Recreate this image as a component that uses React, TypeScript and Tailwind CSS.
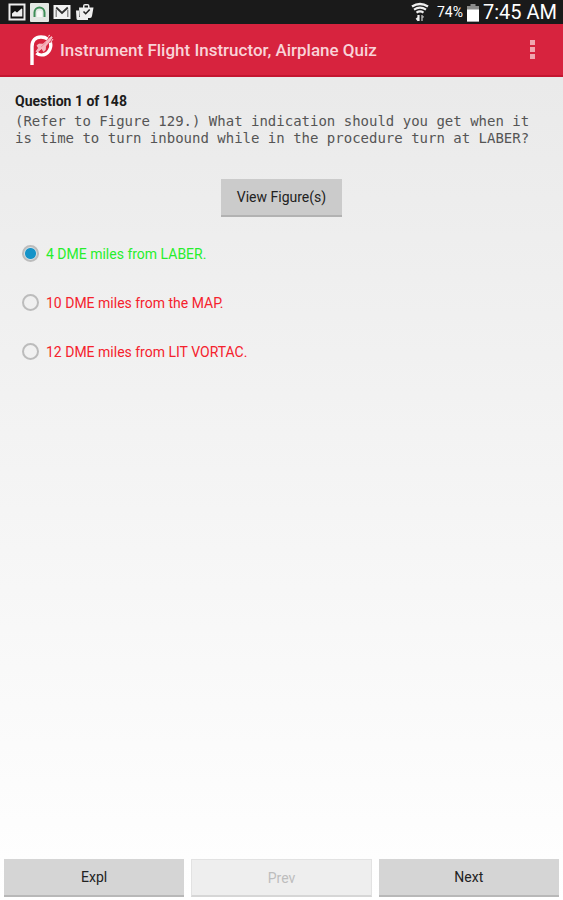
import { useState } from 'react';

const answers = [
  { id: 'a', text: '4 DME miles from LABER.', correct: true },
  { id: 'b', text: '10 DME miles from the MAP.', correct: false },
  { id: 'c', text: '12 DME miles from LIT VORTAC.', correct: false },
];

function StatusBar() {
  return (
    <div className="flex h-6 items-center justify-between bg-[#1a1a1a] px-2 pr-1.5 text-white">
      <div className="flex items-center gap-1">
        {/* picture */}
        <svg width="18" height="18" viewBox="0 0 18 18">
          <rect x="1.5" y="1.5" width="15" height="15" fill="#111" stroke="#eee" strokeWidth="2" />
          <path d="M4 13.5V10.5l3-2.5 2 1.5L13.5 5.5l.8.5v7.5z" fill="#eee" />
        </svg>
        {/* headset app */}
        <svg width="19" height="19" viewBox="0 0 19 19">
          <rect width="19" height="19" rx="1" fill="#e4e8e4" />
          <path d="M4.5 14V9.500a5 5 0 0 1 10 0V14" fill="none" stroke="#3f8f58" strokeWidth="2" />
          <path d="M7 14V10a2.500 2.500 0 0 1 5 0v4" fill="#f6faf6" />
        </svg>
        {/* mail */}
        <svg width="18" height="18" viewBox="0 0 18 18">
          <rect x="0.5" y="2" width="17" height="14" fill="#f2f2f2" />
          <path d="M3.2 4.5L9 10l5.8-5.5" fill="none" stroke="#333" strokeWidth="1.8" />
          <path d="M3.2 14V6.5M14.8 14V6.5" stroke="#777" strokeWidth="1.2" />
        </svg>
        {/* checked bag */}
        <svg width="18" height="18" viewBox="0 0 18 18" className="ml-px">
          <path d="M0 7.500h3V14h9v3H2q-1.500 0-1.500-1.500z" fill="#eee" />
          <path d="M3 4.500H7V3q0-2 2-2h2.500q2 0 2 2v1.500H17.500l-1.500 8.500q-.3 2-2 2H5.500q-2 0-2-2zM8.500 4.500H12V2.500H8.500z" fill="#eee" fillRule="evenodd" />
          <path d="M7.500 8.500l2.200 2.200 4-4.200" fill="none" stroke="#222" strokeWidth="1.600" />
        </svg>
      </div>
      <div className="flex items-center">
        <svg width="18" height="20" viewBox="0 0 18 20" fill="none" stroke="#eee">
          <path d="M1 4.500q8-5 16 0" strokeWidth="2.400" />
          <path d="M3 7.700q6-4 12 0" strokeWidth="2.200" />
          <path d="M5.500 10.700q3.500-2.500 7 0" strokeWidth="2.200" />
          <path d="M7.500 13v6M5.500 16l2 2.500" strokeWidth="2.200" />
          <path d="M11 19v-6M11 13.500l1.500 2" stroke="#aaa" strokeWidth="1.500" />
        </svg>
        <span className="ml-2 mr-1 text-sm">74%</span>
        <svg width="12" height="19" viewBox="0 0 12 19">
          <path d="M3.500 1h5v2H12v15.500H0V3h3.500z" fill="#8b8b8b" />
          <path d="M0 6.500h12v12H0z" fill="#fff" />
        </svg>
        <span className="ml-1 text-xl">7:45 AM</span>
      </div>
    </div>
  );
}

function Logo() {
  return (
    <svg width="26" height="32" viewBox="0 0 26 32" fill="none" stroke="#fff">
      <path d="M4 31V12.500C4 6.500 7.500 3 13 3q4 0 6.500 2" strokeWidth="3.400" />
      <path d="M22.500 8.500c1.500 6-2.500 12.500-9 12.500-2 0-3.800-.8-5-2" strokeWidth="3.200" />
      {/* plane */}
      <path d="M8 17.500l2.500-3.500-1.500-2.500 2-1.500 4 .2 5-4.700L23.500 2.500l.8.8-2.600 4.200-4 4.500-.5 4-1.500 1.500-2-3-3.500 3z" fill="#f6b5bd" stroke="#f9cdd2" strokeWidth=".7" />
      <path d="M20 2.500l2-1.500M23 8l2-3" stroke="#f9cdd2" strokeWidth="1" />
      <path d="M13 13l5-4.500" stroke="#e8798a" strokeWidth=".7" />
    </svg>
  );
}

export default function App() {
  const [selected, setSelected] = useState('a');

  return (
    <div className="flex min-h-screen flex-col bg-linear-to-b from-[#e8e8e8] to-white font-[Roboto,sans-serif]">
      <StatusBar />
      <header className="flex h-[53px] items-center border-b-2 border-[#c41630] bg-[#d7233e] pl-7 pr-6 text-white">
        <Logo />
        <h1 className="ml-1.5 flex-1 pt-0.5 text-[17px] font-medium text-[#f9d3d8]">Instrument Flight Instructor, Airplane Quiz</h1>
        <button aria-label="More options" className="flex flex-col items-center gap-0.5 px-1">
          <span className="size-[5px] bg-[#f0a5af]" />
          <span className="size-[5px] bg-[#f0a5af]" />
          <span className="size-[5px] bg-[#f0a5af]" />
        </button>
      </header>

      <main className="flex flex-1 flex-col px-[15px] pt-4">
        <h2 className="text-sm leading-4 font-bold text-[#1c1c1c]">Question 1 of 148</h2>
        <p className="mt-1 font-['DejaVu_Sans_Mono',monospace] text-sm leading-[17px] text-[#555]">
          (Refer to Figure 129.) What indication should you get when it is time to turn inbound while in the procedure turn at LABER?
        </p>
        <button className="mt-8 h-[38px] self-center border-b-2 border-[#b2b2b2] bg-[#cbcbcb] px-4 text-sm text-[#222]">
          View Figure(s)
        </button>

        <fieldset className="mt-3">
          {answers.map((a) => (
            <label
              key={a.id}
              className={a.correct ? 'flex h-[49px] items-center gap-[7px] pl-[7px] text-sm text-[#26ee2c]' : 'flex h-[49px] items-center gap-[7px] pl-[7px] text-sm text-[#f5222d]'}
            >
              <input
                type="radio"
                name="answer"
                checked={selected === a.id}
                onChange={() => setSelected(a.id)}
                className="size-[17px] appearance-none rounded-full border-2 border-[#bcbcbc] checked:bg-[radial-gradient(circle,#1593c8_5px,#d5e0e5_6px)]"
              />
              {a.text}
            </label>
          ))}
        </fieldset>
      </main>

      <footer className="grid grid-cols-3 gap-[7px] px-1 pb-[3px] text-sm text-[#222]">
        <button className="h-[38px] border-b-2 border-[#b8b8b8] bg-[#d5d5d5]">Expl</button>
        <button disabled className="h-[38px] border border-b-2 border-[#e2e2e2] border-b-[#d6d6d6] bg-[#eeeeee] text-[#bdbdbd]">Prev</button>
        <button className="h-[38px] border-b-2 border-[#b8b8b8] bg-[#d5d5d5]">Next</button>
      </footer>
    </div>
  );
}
